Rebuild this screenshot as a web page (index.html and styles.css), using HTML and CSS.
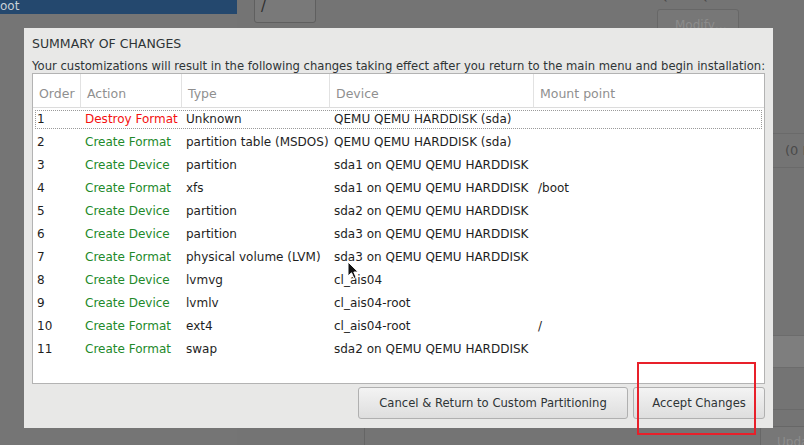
FILE: index.html
```html
<!DOCTYPE html>
<html>
<head>
<meta charset="utf-8">
<link rel="stylesheet" href="styles.css">
</head>
<body>
<div class="screen">
  <div class="left-pane">
    <div class="selected-row">oot</div>
  </div>
  <div class="right-pane">
    <div class="top-row">
      <div class="mount-field">/</div>
      <div class="device-info">
        <div class="device-name">QEMU QEMU HARDDISK</div>
        <div class="ghost-btn modify">Modify…</div>
      </div>
    </div>
    <div class="status-row"><span class="status-text">(0 B)</span></div>
    <div class="spacer"></div>
    <div class="band"></div>
    <div class="gap"></div>
    <div class="footer">
      <div class="footer-divider"></div>
      <div class="ghost-btn update">Update Settings</div>
    </div>
  </div>
</div>

<div class="dialog">
  <div class="title">SUMMARY OF CHANGES</div>
  <div class="desc">Your customizations will result in the following changes taking effect after you return to the main menu and begin installation:</div>
  <div class="table">
    <div class="th">Order</div><div class="th">Action</div><div class="th">Type</div><div class="th">Device</div><div class="th last">Mount point</div>
    <div class="rows">
      <div class="row focused"><span>1</span><span class="destroy">Destroy Format</span><span>Unknown</span><span>QEMU QEMU HARDDISK (sda)</span><span></span></div>
      <div class="row"><span>2</span><span class="create">Create Format</span><span>partition table (MSDOS)</span><span>QEMU QEMU HARDDISK (sda)</span><span></span></div>
      <div class="row"><span>3</span><span class="create">Create Device</span><span>partition</span><span>sda1 on QEMU QEMU HARDDISK</span><span></span></div>
      <div class="row"><span>4</span><span class="create">Create Format</span><span>xfs</span><span>sda1 on QEMU QEMU HARDDISK</span><span>/boot</span></div>
      <div class="row"><span>5</span><span class="create">Create Device</span><span>partition</span><span>sda2 on QEMU QEMU HARDDISK</span><span></span></div>
      <div class="row"><span>6</span><span class="create">Create Device</span><span>partition</span><span>sda3 on QEMU QEMU HARDDISK</span><span></span></div>
      <div class="row"><span>7</span><span class="create">Create Format</span><span>physical volume (LVM)</span><span>sda3 on QEMU QEMU HARDDISK</span><span></span></div>
      <div class="row"><span>8</span><span class="create">Create Device</span><span>lvmvg</span><span>cl_ais04</span><span></span></div>
      <div class="row"><span>9</span><span class="create">Create Device</span><span>lvmlv</span><span>cl_ais04-root</span><span></span></div>
      <div class="row"><span>10</span><span class="create">Create Format</span><span>ext4</span><span>cl_ais04-root</span><span>/</span></div>
      <div class="row"><span>11</span><span class="create">Create Format</span><span>swap</span><span>sda2 on QEMU QEMU HARDDISK</span><span></span></div>
    </div>
  </div>
  <div class="actions">
    <button class="btn cancel">Cancel &amp; Return to Custom Partitioning</button>
    <button class="btn accept">Accept Changes</button>
  </div>
</div>

<div class="highlight"></div>
<svg class="cursor" width="14" height="20" viewBox="0 0 14 20"><path d="M1 1 L1 15 L4.5 11.8 L7 17.5 L9.2 16.5 L6.8 11 L11.2 11 Z" fill="#111" stroke="#fff" stroke-width="1" stroke-linejoin="round"/></svg>
</body>
</html>
```
FILE: styles.css
```css
html, body {
  margin: 0;
  padding: 0;
}
body {
  width: 804px;
  height: 445px;
  overflow: hidden;
  position: relative;
  background: #747474;
  font-family: "DejaVu Sans", sans-serif;
}

/* dimmed background application */
.screen {
  display: grid;
  grid-template-columns: 237px 1fr;
  height: 445px;
}
.left-pane {
  background: #757575;
}
.selected-row {
  height: 14px;
  background: #24486e;
  color: #c9d0d8;
  font-size: 12px;
  line-height: 12px;
}
.right-pane {
  display: flex;
  flex-direction: column;
  background: #747474;
  overflow: hidden;
}
.top-row {
  height: 133px;
  display: flex;
  align-items: flex-start;
  flex-shrink: 0;
}
.mount-field {
  margin-left: 17px;
  margin-top: -10px;
  width: 62px;
  height: 33px;
  border: 1px solid #5f5f5f;
  border-radius: 3px;
  background: #797979;
  color: #2f2f2f;
  font-size: 15px;
  line-height: 22px;
  padding: 4px 0 0 6px;
  box-sizing: border-box;
  flex-shrink: 0;
}
.device-info {
  margin-left: 341px;
  display: flex;
  flex-direction: column;
  flex-shrink: 0;
}
.device-name {
  margin-top: -11px;
  padding-left: 2px;
  height: 14px;
  color: #4a4a4a;
  font-size: 12px;
  line-height: 14px;
  white-space: nowrap;
}
.ghost-btn {
  border: 1px solid #676767;
  border-radius: 3px;
  background: #777;
  color: #8c8c8c;
  font-size: 12px;
  white-space: nowrap;
  box-sizing: border-box;
}
.modify {
  margin-top: 6px;
  width: 82px;
  height: 32px;
  line-height: 30px;
  padding-left: 17px;
}
.status-row {
  height: 35px;
  border-top: 1px solid #6a6a6a;
  border-bottom: 1px solid #6a6a6a;
  box-sizing: border-box;
  flex-shrink: 0;
  display: flex;
  align-items: center;
  padding-left: 548px;
  color: #4a4a4a;
  font-size: 13px;
  white-space: nowrap;
}
.spacer {
  height: 167px;
  flex-shrink: 0;
}
.band {
  height: 33px;
  background: #7e7e7e;
  border-top: 1px solid #6c6c6c;
  border-bottom: 1px solid #6c6c6c;
  box-sizing: border-box;
  flex-shrink: 0;
}
.gap {
  height: 42px;
  flex-shrink: 0;
  border-bottom: 1px solid #6a6a6a;
  box-sizing: border-box;
}
.footer {
  flex: 1;
  display: flex;
  align-items: flex-start;
}
.footer-divider {
  margin-left: 127px;
  width: 0;
  align-self: stretch;
  border-left: 1px solid #656565;
}
.update {
  margin-left: 395px;
  margin-top: 16px;
  width: 120px;
  height: 32px;
  line-height: 30px;
  padding-left: 16px;
}

/* dialog */
.dialog {
  position: absolute;
  left: 24px;
  top: 28px;
  width: 749px;
  height: 400px;
  box-sizing: border-box;
  background: #e8e8e7;
  padding: 0 8px 9px 8px;
  display: flex;
  flex-direction: column;
  color: #2e3436;
}
.title {
  margin-top: 9px;
  height: 14px;
  line-height: 14px;
  font-size: 12.5px;
  white-space: nowrap;
}
.desc {
  margin-top: 9px;
  height: 13px;
  line-height: 13px;
  font-size: 11.6px;
  white-space: nowrap;
}
.table {
  height: 311px;
  box-sizing: border-box;
  border: 1px solid #b3b3b3;
  background: #fff;
  display: grid;
  grid-template-columns: 48px 101px 148px 204px 1fr;
  grid-template-rows: 34px 1fr;
  font-size: 12px;
}
.th {
  border-right: 1px solid #e2e2e2;
  border-bottom: 1px solid #dcdcdc;
  color: #8f8f8f;
  font-size: 12.5px;
  line-height: 26px;
  padding: 7px 0 0 6px;
  white-space: nowrap;
}
.th.last {
  border-right: none;
}
.rows {
  grid-column: 1 / -1;
  display: flex;
  flex-direction: column;
}
.row {
  display: grid;
  grid-template-columns: 48px 101px 148px 204px 1fr;
  height: 23px;
  line-height: 23px;
  color: #1e1e1e;
  white-space: nowrap;
}
.row span {
  padding-left: 4px;
  overflow: hidden;
}
.row.focused {
  outline: 1px dotted #9a9a9a;
  outline-offset: -3px;
}
.destroy {
  color: #f41010;
}
.create {
  color: #22892a;
}
.actions {
  margin-top: 3px;
  display: flex;
  justify-content: flex-end;
  gap: 5px;
}
.btn {
  height: 32px;
  box-sizing: border-box;
  border: 1px solid #b0b0b0;
  border-radius: 3px;
  background: linear-gradient(#f3f3f3, #dedede);
  color: #2e3436;
  font-family: "DejaVu Sans", sans-serif;
  font-size: 11.6px;
  padding: 0;
}
.cancel {
  width: 270px;
}
.accept {
  width: 132px;
}

/* annotation overlay */
.highlight {
  position: absolute;
  left: 637px;
  top: 362px;
  width: 119px;
  height: 73px;
  box-sizing: border-box;
  border: 2px solid #e8202a;
}
.cursor {
  position: absolute;
  left: 347px;
  top: 261px;
}
```
